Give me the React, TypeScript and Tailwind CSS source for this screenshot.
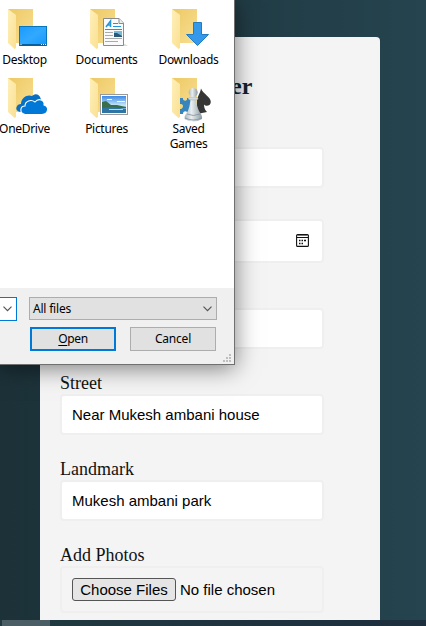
import type { ReactNode } from "react";

function Folder({ children }: { children: ReactNode }) {
  return (
    <svg width="42" height="44" viewBox="0 0 42 44" className="block overflow-visible">
      <defs>
        <linearGradient id="back" x1="0" y1="0" x2="1" y2="1">
          <stop offset="0" stopColor="#edc965" />
          <stop offset="1" stopColor="#f9df92" />
        </linearGradient>
        <linearGradient id="front" x1="0" y1="0" x2="1" y2="1">
          <stop offset="0" stopColor="#ffefb9" />
          <stop offset="1" stopColor="#fae092" />
        </linearGradient>
        <linearGradient id="screen" x1="0" y1="0" x2="1" y2="1">
          <stop offset="0" stopColor="#189aff" />
          <stop offset=".5" stopColor="#32a9ff" />
          <stop offset="1" stopColor="#1298fb" />
        </linearGradient>
        <linearGradient id="sky" x1="0" y1="0" x2="0" y2="1">
          <stop offset="0" stopColor="#3d88e5" />
          <stop offset=".55" stopColor="#c7e7f7" />
          <stop offset="1" stopColor="#397dae" />
        </linearGradient>
        <linearGradient id="pawn" x1="0" y1="0" x2="1" y2="0">
          <stop offset="0" stopColor="#a9b6bd" />
          <stop offset=".4" stopColor="#e8edef" />
          <stop offset="1" stopColor="#8d9ba4" />
        </linearGradient>
      </defs>
      <path d="M1 1H26V35H9L1 34Z" fill="url(#back)" />
      <path d="M1 1L9 7V40L7.5 41L1 35Z" fill="url(#front)" />
      {children}
    </svg>
  );
}

const desktop = (
  <g>
    <rect x="12.5" y="18.5" width="27" height="19" fill="url(#screen)" stroke="#0876bd" />
    <path d="M13 36H39V38H13Z" fill="#075f9d" />
    <path d="M13.5 36.5h1M34 36.5h1M36 36.5h1M38 36.5h1" stroke="#fff" />
  </g>
);
const documents = (
  <g>
    <path d="M15 38H39L36 36Z" fill="#ddd" />
    <path d="M14.5 10.5H30L34.5 15V37.5H14.5Z" fill="#fafafa" stroke="#8b8b8b" />
    <path d="M30 10.5V15.5H34.5" fill="#eee" stroke="#8b8b8b" />
    <path d="M17 19L21.5 13V19M18.5 17H22" stroke="#2595d4" strokeWidth="1.5" fill="none" />
    <path d="M24 15.5H29M24 18.5H32M16 21.5H33" stroke="#2595d4" />
    <path d="M16 24.5H24M16 27.5H24M16 30.5H33M16 33.5H29" stroke="#aaa" />
    <rect x="25" y="23" width="8" height="6" fill="#79bad8" />
    <path d="M25 25L28 25L33 28V29H25Z" fill="#2c577a" />
  </g>
);
const downloads = (
  <path d="M22.5 14.5H30.5V26.5H37.5L26.5 37.5L15.5 26.5H22.5Z" fill="#3499eb" stroke="#247cc0" />
);
const oneDrive = (
  <g>
    <path d="M13 35C7 34 9 27 14 27C14 20 21 17 25 19C30 15 34 19 34 24L30 34Z" fill="#0870c2" />
    <path d="M18 37.5C12 36 13 29 18 29C18 24 24 22 28 25C32 20 38 24 37 28C43 30 41 37.5 35 37.5Z" fill="#0078d7" stroke="#fff" strokeWidth="1.1" />
  </g>
);
const pictures = (
  <g>
    <rect x="11.5" y="17.5" width="27" height="20" fill="#fff" stroke="#999" />
    <rect x="13" y="19" width="24" height="17" fill="url(#sky)" />
    <path d="M18 22h5v1h-5M28 24h8v1h-8" fill="#eef9ff" />
    <path d="M13 25L17 24L22 28L28 28L37 30V31H13Z" fill="#396d4c" />
    <path d="M13 31L24 30L37 32V36H13Z" fill="#2f75a4" />
    <path d="M20 32.5H34" stroke="#b3ddeb" />
  </g>
);
const savedGames = (
  <g>
    <path d="M9 21H12C11 24 17 25 16 21H21V37H16C17 33 12 33 12 37H9V32C13 32 13 26 9 27Z" fill="#3685bd" />
    <path d="M30 11.5C32 17 40 20 39.8 25C39.5 29 35 30 33 27.5C33 31 34 33 36 35L26 37V24C26 20 29 17 30 11.5Z" fill="#363636" />
    <path d="M19.5 19H25C25 27 27 33 30 37Q31.5 40 31 42Q22.5 47 13.5 42Q13 39 15 37C18 33 19.5 27 19.5 19Z" fill="url(#pawn)" />
    <ellipse cx="22.2" cy="21.5" rx="5" ry="1.5" fill="#d3dce0" stroke="#9eabb2" strokeWidth=".5" />
    <circle cx="22.2" cy="15.5" r="4.5" fill="url(#pawn)" />
    <path d="M16 37Q22.5 40 29 37M14 41Q22.5 45 30.5 41" stroke="#7e8f99" strokeWidth=".8" fill="none" />
  </g>
);

const folders = [
  { name: "Desktop", art: desktop },
  { name: "Documents", art: documents },
  { name: "Downloads", art: downloads },
  { name: "OneDrive", art: oneDrive },
  { name: "Pictures", art: pictures },
  { name: "Saved Games", art: savedGames },
];

function Chevron() {
  return (
    <svg width="9" height="6" viewBox="0 0 9 6" fill="none" stroke="#555" strokeWidth="1.2">
      <path d="M.5 .7L4.5 4.7L8.5 .7" />
    </svg>
  );
}

function FileDialog() {
  return (
    <div className="absolute left-0 top-0 flex h-[365px] w-[235px] flex-col border-r border-b border-[#707070] bg-white font-['Noto_Sans',sans-serif] text-[12px] text-black shadow-[0_3px_22px_rgba(0,0,0,0.5)]">
      <div className="h-[288px] overflow-hidden pt-2">
        <div className="-ml-4 grid w-[246px] grid-cols-3 grid-rows-[69px_75px]">
          {folders.map((f) => (
            <div key={f.name} className="flex flex-col items-center">
              <div className="ml-1.5"><Folder>{f.art}</Folder></div>
              <div className="mr-px w-[62px] text-center text-[12px] leading-[15px] tracking-[-0.3px]">{f.name}</div>
            </div>
          ))}
        </div>
      </div>
      <div className="flex-1 bg-[#f0f0f0] pt-[9px]">
        <div className="flex items-start gap-3">
          <div className="flex h-6 w-[17px] items-center justify-end border border-l-0 border-[#0078d7] bg-white pr-1"><Chevron /></div>
          <div className="flex h-[23px] w-[188px] items-center justify-between border border-[#adadad] bg-[#e1e1e1] pr-1 pl-[3px]">
            <span className="tracking-[-0.2px]">All files</span><Chevron />
          </div>
        </div>
        <div className="mt-1.5 ml-[30px] flex gap-3.5">
          <div className="flex h-6 w-[86px] items-center justify-center border-2 border-[#0078d7] bg-[#e1e1e1] tracking-[-0.4px]"><span><span className="underline underline-offset-2">O</span>pen</span></div>
          <div className="flex h-6 w-[86px] items-center justify-center border border-[#adadad] bg-[#e1e1e1] tracking-[-0.2px]">Cancel</div>
        </div>
        <svg width="8" height="8" viewBox="0 0 8 8" fill="#bfbfbf" className="mt-[3px] ml-[223px]">
          <path d="M6 0h2v2H6zM3 3h2v2H3zM6 3h2v2H6zM0 6h2v2H0zM3 6h2v2H3zM6 6h2v2H6z" />
        </svg>
      </div>
    </div>
  );
}

function Label({ children }: { children: ReactNode }) {
  return <div className="h-[45px] pt-6 text-[18px] leading-[21px]">{children}</div>;
}

const box = "flex items-center rounded-[4px] border-2 border-[#efefef] px-2.5 font-['Liberation_Sans',Arial,sans-serif] text-[15px] text-black";

export default function App() {
  return (
    <div className="relative h-[626px] w-[426px] overflow-hidden bg-linear-to-r from-[#1c3138] to-[#25444f]">
      <div className="flex h-full flex-col pt-[37px]">
        <main className="ml-10 h-[583px] w-[340px] rounded-t-[4px] bg-[#f4f4f4] pl-5 font-['Liberation_Serif','Times_New_Roman',serif] text-[#111]">
          <h1 className="h-[110px] pt-[35px] pl-[171px] text-[24px] leading-[28px] font-bold text-[#0d2430]">er</h1>
          <div className="w-[264px]">
            <div className={`${box} h-[41px] bg-white`} />
            <div className={`${box} mt-[31px] h-[44px] justify-end bg-white`}>
              <svg width="13" height="13" viewBox="0 0 13 13" fill="none" stroke="#111" className="mr-[3px] mb-0.5">
                <rect x=".6" y=".6" width="11.8" height="11.8" rx="1" strokeWidth="1.1" />
                <path d="M1 1.5H12" stroke="#777" />
                <path d="M1 3.5H12" />
                <path d="M3 6.5h1.5M5.5 6.5H7M8 6.5h2M3 9.5h1.5M5.5 9.5H7" strokeWidth="1.5" />
              </svg>
            </div>
            <div className={`${box} mt-[45px] h-[41px] bg-white`} />
            <Label>Street</Label>
            <div className={`${box} h-[41px] bg-white pt-0.5`}>Near Mukesh ambani house</div>
            <Label>Landmark</Label>
            <div className={`${box} h-[41px] bg-white pt-0.5`}>Mukesh ambani park</div>
            <Label>Add Photos</Label>
            <div className={`${box} h-[47px] gap-1`}>
              <span className="flex h-[23px] w-[104px] items-center justify-center rounded-[3px] border border-[#555] bg-[#e5e5e5] pt-0.5">Choose Files</span>
              <span className="pt-0.5">No file chosen</span>
            </div>
          </div>
        </main>
        <div className="flex h-1.5 bg-linear-to-r from-[#203940] to-[#1d2e3d] pl-0.5"><div className="w-12 bg-[#4c5e65]" /></div>
      </div>
      <FileDialog />
    </div>
  );
}
